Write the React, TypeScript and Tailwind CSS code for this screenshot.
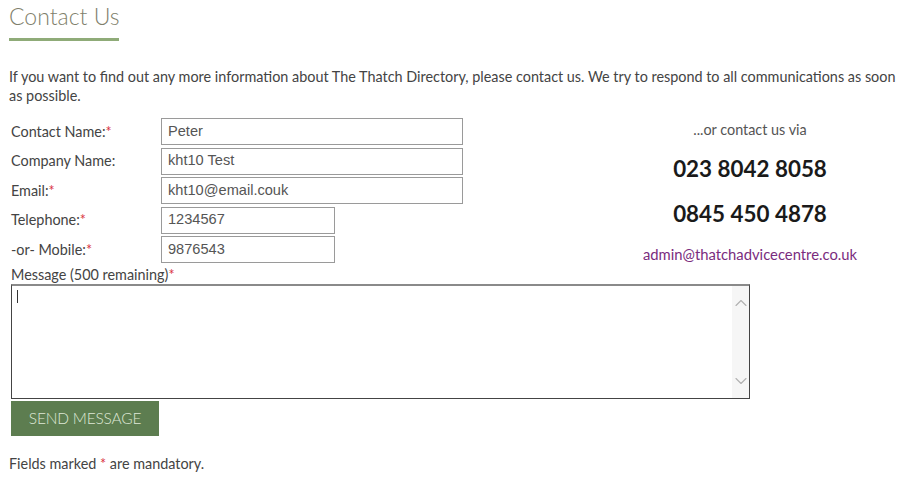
import { ChevronDown, ChevronUp } from "lucide-react";

const font = { fontFamily: "Lato, 'Open Sans', sans-serif" };

function Req() {
  return <span className="text-[#d9333f]">*</span>;
}

interface RowProps {
  label: string;
  required?: boolean;
  value: string;
  short?: boolean;
}

function Row({ label, required, value, short }: RowProps) {
  return (
    <div className="flex items-center h-[27px]">
      <div className="w-[152px] pl-[2px] text-[14.4px] text-[#444]">
        {label}
        {required && <Req />}
      </div>
      <div
        className={`h-[27px] border border-[#9a9a9a] bg-white flex items-center px-[6px] text-[14.6px] text-[#555] ${
          short ? "w-[174px]" : "w-[302px]"
        }`}
        style={{ fontFamily: "'Liberation Sans', Arial, sans-serif" }}
      >
        {value}
      </div>
    </div>
  );
}

export default function App() {
  return (
    <div className="w-[900px] h-[480px] bg-white pl-[9px] overflow-hidden" style={font}>
      <h1 className="text-[23px] leading-[32px] font-light text-[#7f7f6c]">Contact Us</h1>
      <div className="mt-[6px] h-[3px] w-[110px] bg-[#8fab78]" />

      <p className="mt-[26px] text-[14.4px] leading-[19px] text-[#444] whitespace-nowrap">
        If you want to find out any more information about The Thatch Directory, please contact us. We try to respond to all communications as soon
        <br />
        as possible.
      </p>

      <div className="mt-[13px] flex">
        <div className="w-[591px] flex flex-col gap-[2.5px]">
          <Row label="Contact Name:" required value="Peter" />
          <Row label="Company Name:" value="kht10 Test" />
          <Row label="Email:" required value="kht10@email.couk" />
          <Row label="Telephone:" required value="1234567" short />
          <Row label="-or- Mobile:" required value="9876543" short />
        </div>
        <div className="w-[300px] flex flex-col items-center">
          <div className="mt-[2px] text-[14.4px] leading-[20px] text-[#555]">...or contact us via</div>
          <div className="mt-[15px] text-[22.4px] leading-[28px] font-bold text-[#1a1a1a]">023 8042 8058</div>
          <div className="mt-[17px] text-[22.4px] leading-[28px] font-bold text-[#1a1a1a]">0845 450 4878</div>
          <div className="mt-[16px] text-[14.8px] leading-[20px] text-[#7a2c7e]">admin@thatchadvicecentre.co.uk</div>
        </div>
      </div>

      <div className="mt-px pl-[2px] text-[14.4px] leading-[20px] text-[#444]">
        Message (500 remaining)
        <Req />
      </div>
      <div className="-mt-px ml-[2px] w-[739px] h-[115px] border border-[#444] border-t-2 border-t-[#8a8a8a] flex">
        <div className="flex-1 pl-[5px] pt-[4px]">
          <div className="w-px h-[13px] bg-[#333]" />
        </div>
        <div className="w-[17px] bg-[#f6f6f6] flex flex-col items-center justify-between py-[7px]">
          <ChevronUp size={20} strokeWidth={1.3} className="text-[#b0b0b0]" />
          <ChevronDown size={20} strokeWidth={1.3} className="text-[#b0b0b0]" />
        </div>
      </div>

      <button className="mt-[2px] ml-[2px] w-[148px] h-[35px] bg-[#5d7d50] text-[#dfe8d6] text-[15.5px] font-light tracking-[-0.2px] block">
        SEND MESSAGE
      </button>

      <div className="mt-[18px] text-[14.4px] leading-[20px] text-[#444]">
        Fields marked <Req /> are mandatory.
      </div>
    </div>
  );
}
